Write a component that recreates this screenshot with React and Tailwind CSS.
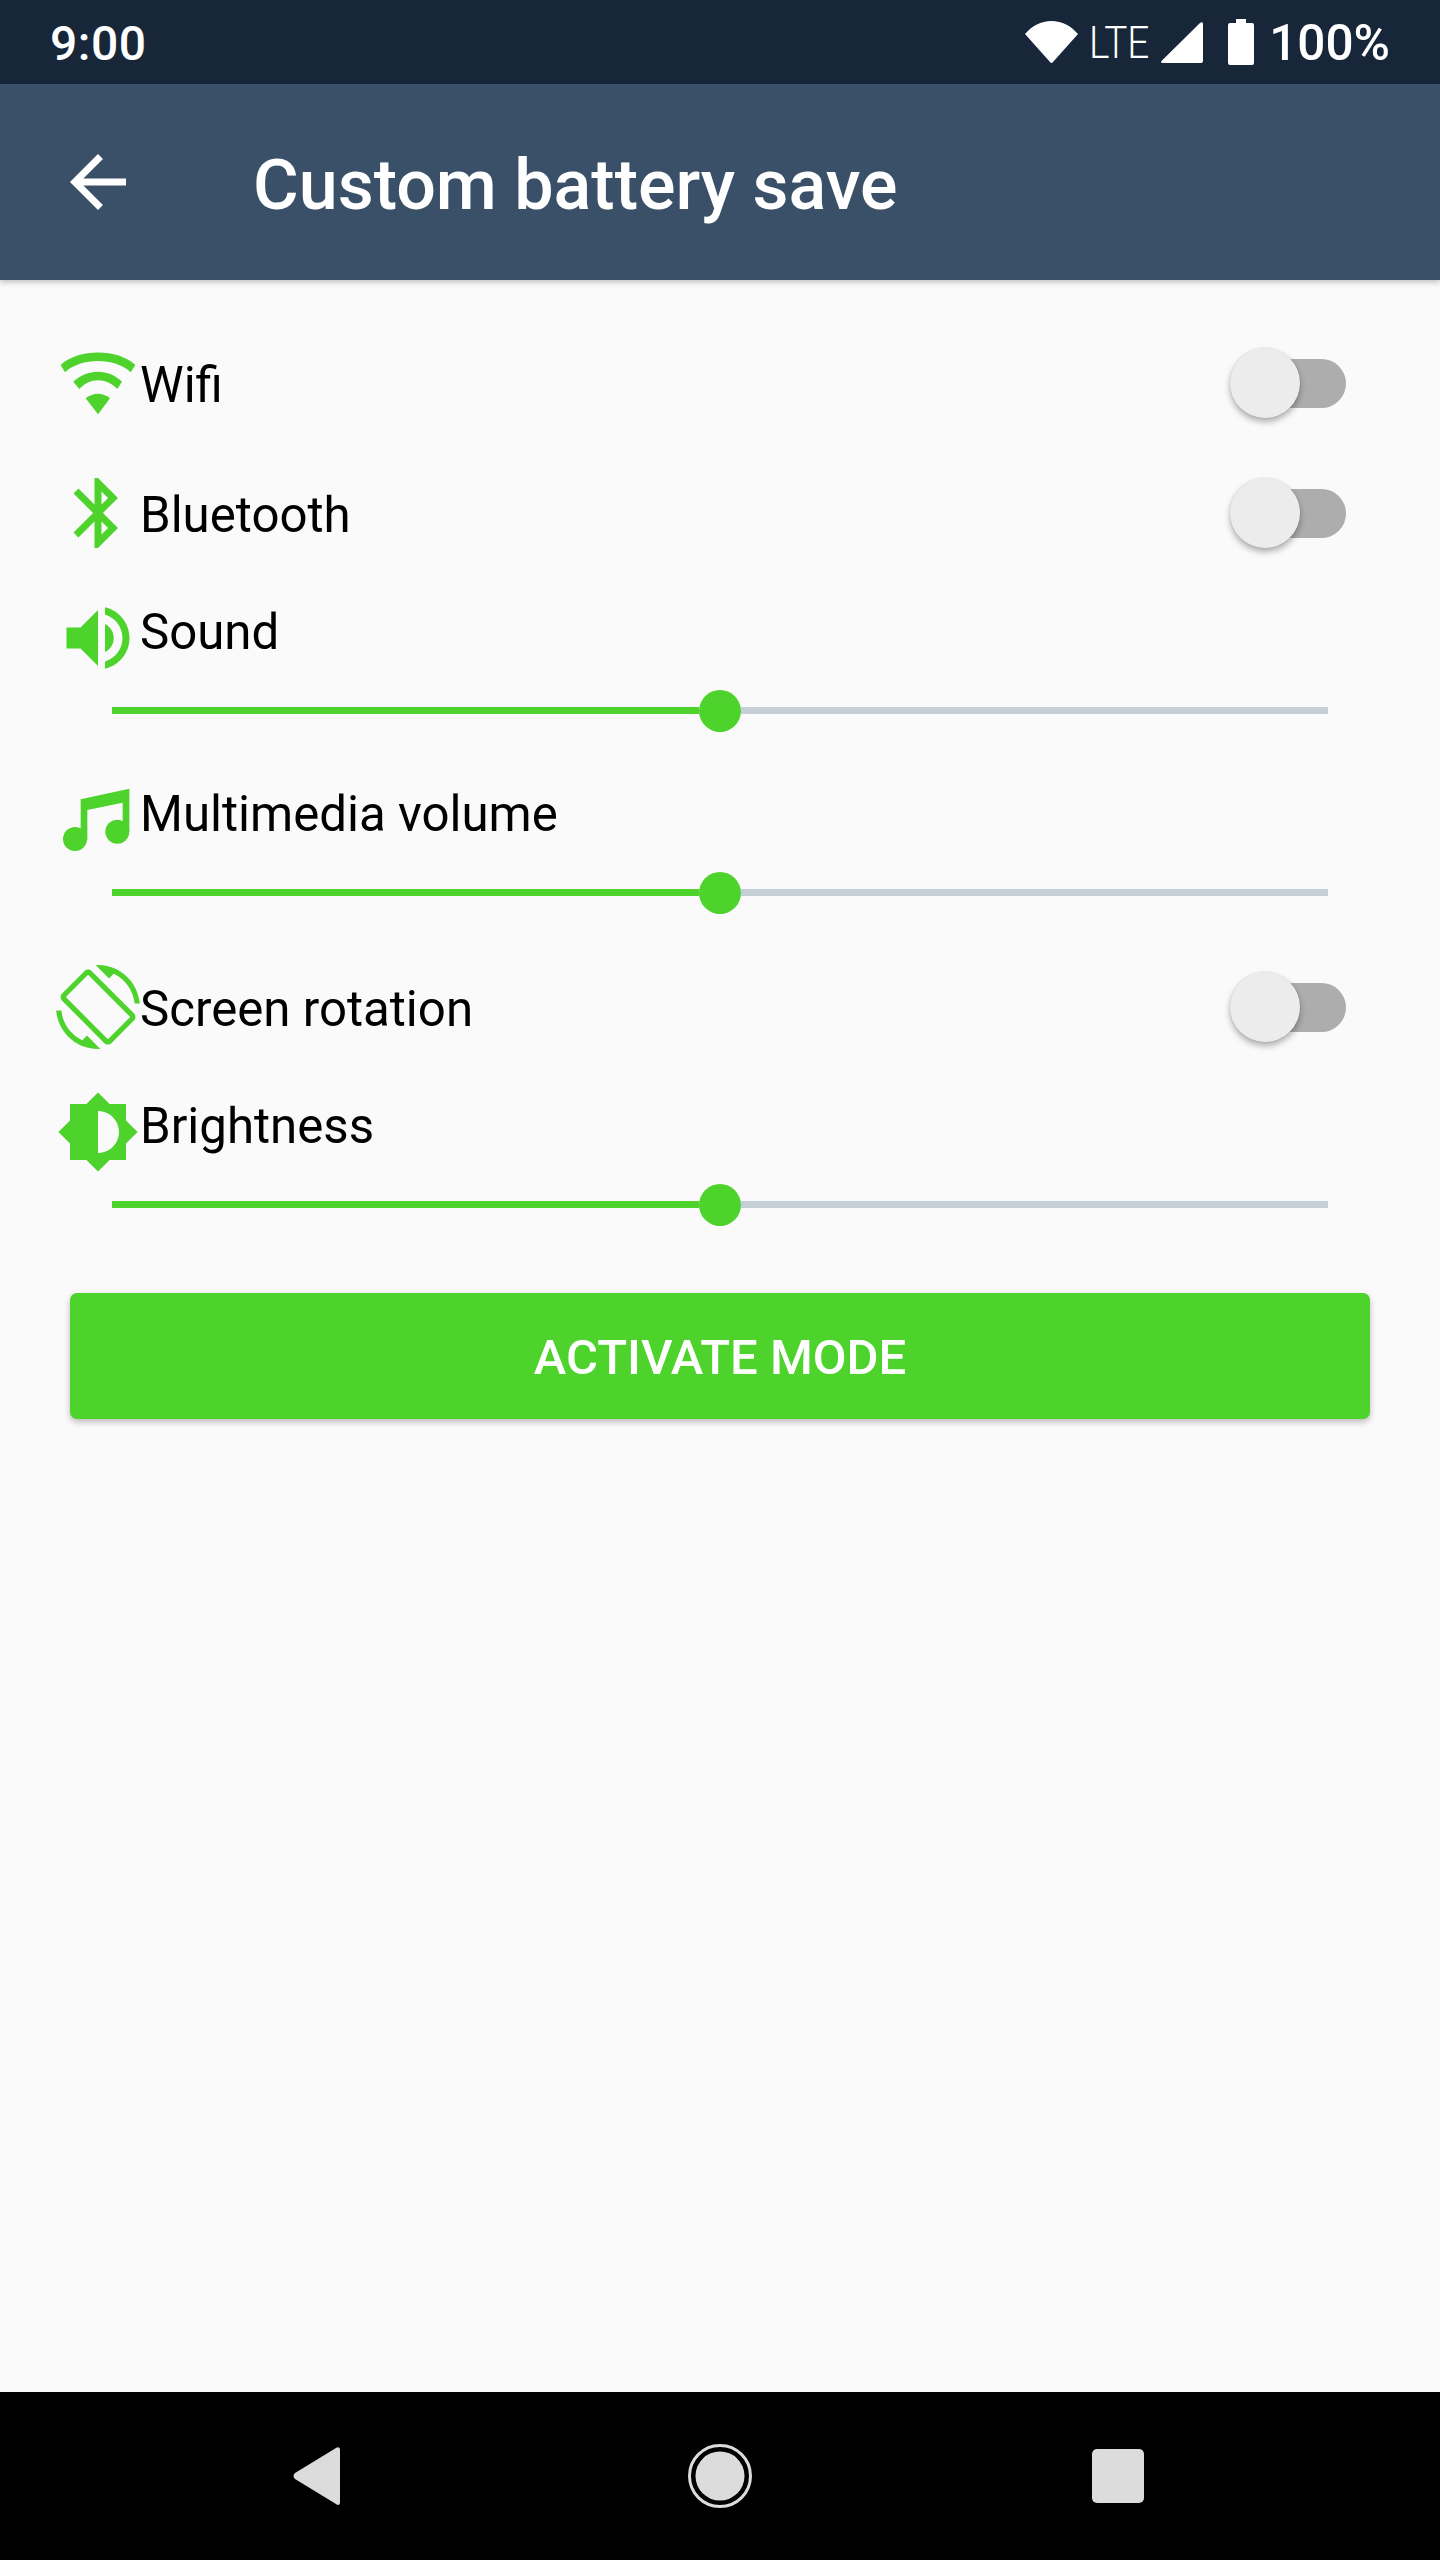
const GREEN = "#4dd32c";

function Toggle() {
  return (
    <div className="ml-auto mr-[38px] flex items-center">
      <div className="relative z-10 w-[70px] h-[70px] rounded-full bg-[#ececec] shadow-[0_4px_6px_rgba(0,0,0,0.3),0_0_2px_rgba(0,0,0,0.12)]" />
      <div className="-ml-[60px] w-[106px] h-[49px] rounded-full bg-[#adadad]" />
    </div>
  );
}

function Slider() {
  return (
    <div className="mt-[10px] mx-[56px] h-[42px] flex items-center">
      <div className="flex-1 h-[7px] mb-[1px] bg-[#4dd32c]" />
      <div className="w-[42px] h-[42px] rounded-full bg-[#4dd32c]" />
      <div className="flex-1 h-[7px] mb-[1px] bg-[#c7cfd6]" />
    </div>
  );
}

function Icon({ children, viewBox = "0 0 24 24" }) {
  return (
    <svg viewBox={viewBox} fill={GREEN} className="w-[84px] h-[84px] shrink-0">
      {children}
    </svg>
  );
}

function ToggleRow({ icon, label, className }) {
  return (
    <div className={`flex items-center ${className}`}>
      {icon}
      <span className="text-[49.200px] leading-[70px] mt-[4px] text-black">{label}</span>
      <Toggle />
    </div>
  );
}

function SliderRow({ icon, label, className }) {
  return (
    <div className={className}>
      <div className="flex items-start">
        {icon}
        <span className="text-[49.200px] leading-[70px] mt-[1px] text-black">{label}</span>
      </div>
      <Slider />
    </div>
  );
}

function StatusBar() {
  return (
    <div className="h-[84px] bg-[#172739] flex items-center pl-[50px] text-white">
      <span className="text-[48px] font-medium leading-none tracking-[0.5px] mt-[3px]">9:00</span>
      <div className="ml-auto flex items-center">
        <svg viewBox="0 0 53 42" fill="white" className="w-[53px] h-[42px]">
          <path d="M0 13C7 5 16 0 26.500 0S46 5 53 13L28 41c-1 1.300-2 1.300-3 0Z" />
        </svg>
        <span className="ml-[11px] text-[45px] font-light leading-none w-[55px] scale-x-[0.86] origin-left">LTE</span>
        <svg viewBox="0 0 42 41" fill="white" className="ml-[17px] w-[42px] h-[41px]">
          <path d="M42 2v37a2 2 0 0 1-2 2H2c-2 0-2.500-1-1-2.500L39 1c1.500-1.500 3-1 3 1Z" />
        </svg>
        <svg viewBox="0 0 26 46" fill="white" className="ml-[25px] w-[26px] h-[46px]">
          <path d="M8 0h10v4h6a2 2 0 0 1 2 2v38a2 2 0 0 1-2 2H2a2 2 0 0 1-2-2V6a2 2 0 0 1 2-2h6Z" />
        </svg>
        <span className="ml-[15px] mr-[50px] text-[49.500px] font-medium leading-none mt-[3px]">100%</span>
      </div>
    </div>
  );
}

function AppBar() {
  return (
    <div className="relative z-10 h-[196px] bg-[#3a5068] flex items-center pl-[56px] shadow-[0_2px_6px_rgba(0,0,0,0.25)]">
      <svg viewBox="0 0 24 24" fill="white" className="w-[84px] h-[84px]">
        <path d="M20 11H7.830l5.590-5.590L12 4l-8 8 8 8 1.410-1.410L7.830 13H20v-2z" />
      </svg>
      <span className="ml-[113px] mt-[6px] text-[70px] font-medium leading-none text-white">Custom battery save</span>
    </div>
  );
}

function NavBar() {
  return (
    <div className="h-[168px] bg-black flex items-center pl-[276px]">
      <svg viewBox="0 0 84 84" fill="#dcdcdc" className="w-[84px] h-[84px]">
        <path d="M64 16v52c0 3-2 4-4 2L19 45c-2-2-2-4 0-6l41-25c2-1.500 4-1 4 2Z" />
      </svg>
      <svg viewBox="0 0 84 84" className="ml-[318px] w-[84px] h-[84px]">
        <circle cx="42" cy="42" r="30.500" fill="none" stroke="#dcdcdc" strokeWidth="3" />
        <circle cx="42" cy="42" r="24.500" fill="#dcdcdc" />
      </svg>
      <div className="ml-[330px] w-[52px] h-[54px] rounded-[5px] bg-[#dcdcdc]" />
    </div>
  );
}

export default function App() {
  return (
    <div className="h-[2560px] flex flex-col bg-[#fafafa] font-['Roboto',sans-serif]">
      <StatusBar />
      <AppBar />
      <main className="flex-1 px-[56px]">
        <ToggleRow
          className="mt-[61px]"
          label="Wifi"
          icon={
            <Icon viewBox="78 63 252 252">
              <path d="M92 135C145 85 263 85 316 135L302 157C255 112 153 112 105 157Z" />
              <path d="M130 185C170 145 238 145 276 185L262 207C230 172 178 172 148 207Z" />
              <path d="M167 235C190 217 218 217 240 235L204 283Z" />
            </Icon>
          }
        />
        <ToggleRow
          className="mt-[46px]"
          label="Bluetooth"
          icon={
            <Icon>
              <path d="M17.710 7.710L12 2h-1v7.590L6.410 5 5 6.410 10.590 12 5 17.590 6.410 19 11 14.410V22h1l5.710-5.710-4.300-4.290 4.300-4.290zM13 5.830l1.880 1.880L13 9.590V5.830zm1.880 10.460L13 18.170v-3.760l1.880 1.880z" />
            </Icon>
          }
        />
        <SliderRow
          className="mt-[41px]"
          label="Sound"
          icon={
            <Icon>
              <path d="M3 9v6h4l5 5V4L7 9H3zm13.500 3c0-1.770-1.020-3.290-2.500-4.030v8.050c1.480-.730 2.500-2.250 2.500-4.020zM14 3.230v2.060c2.890.860 5 3.540 5 6.710s-2.110 5.850-5 6.710v2.060c4.010-.910 7-4.490 7-8.770s-2.990-7.860-7-8.770z" />
            </Icon>
          }
        />
        <SliderRow
          className="mt-[46px]"
          label="Multimedia volume"
          icon={
            <Icon viewBox="78 54 252 252">
              <path d="M298 86L152 118V240H172V150L278 128V215H298Z" />
              <circle cx="135" cy="237" r="36" />
              <circle cx="262" cy="215" r="36" />
            </Icon>
          }
        />
        <ToggleRow
          className="mt-[51px]"
          label="Screen rotation"
          icon={
            <Icon>
              <path d="M16.480 2.520c3.270 1.550 5.610 4.720 5.970 8.480h1.500C23.440 4.840 18.290 0 12 0l-.660.030 3.810 3.810 1.330-1.320zm-6.250-.770c-.590-.590-1.540-.590-2.120 0L1.750 8.110c-.590.590-.590 1.540 0 2.120l12.020 12.020c.590.590 1.540.590 2.120 0l6.360-6.360c.590-.590.590-1.540 0-2.120L10.230 1.750zm4.600 19.440L2.810 9.170l6.360-6.360 12.020 12.020-6.360 6.360zm-7.310.290C4.250 19.940 1.910 16.760 1.550 13H.050C.560 19.160 5.710 24 12 24l.660-.030-3.810-3.810-1.330 1.320z" />
            </Icon>
          }
        />
        <SliderRow
          className="mt-[41px]"
          label="Brightness"
          icon={
            <Icon>
              <path d="M20 15.310L23.310 12 20 8.690V4h-4.690L12 .690 8.690 4H4v4.690L.690 12 4 15.310V20h4.690L12 23.310 15.310 20H20v-4.690zM12 18V6c3.310 0 6 2.690 6 6s-2.690 6-6 6z" />
            </Icon>
          }
        />
        <button className="mt-[67px] mx-[14px] w-[1300px] h-[126px] pt-[3px] rounded-[7px] bg-[#4dd32c] text-white text-[49px] font-medium shadow-[0_3px_6px_rgba(0,0,0,0.25)]">
          ACTIVATE MODE
        </button>
      </main>
      <NavBar />
    </div>
  );
}
